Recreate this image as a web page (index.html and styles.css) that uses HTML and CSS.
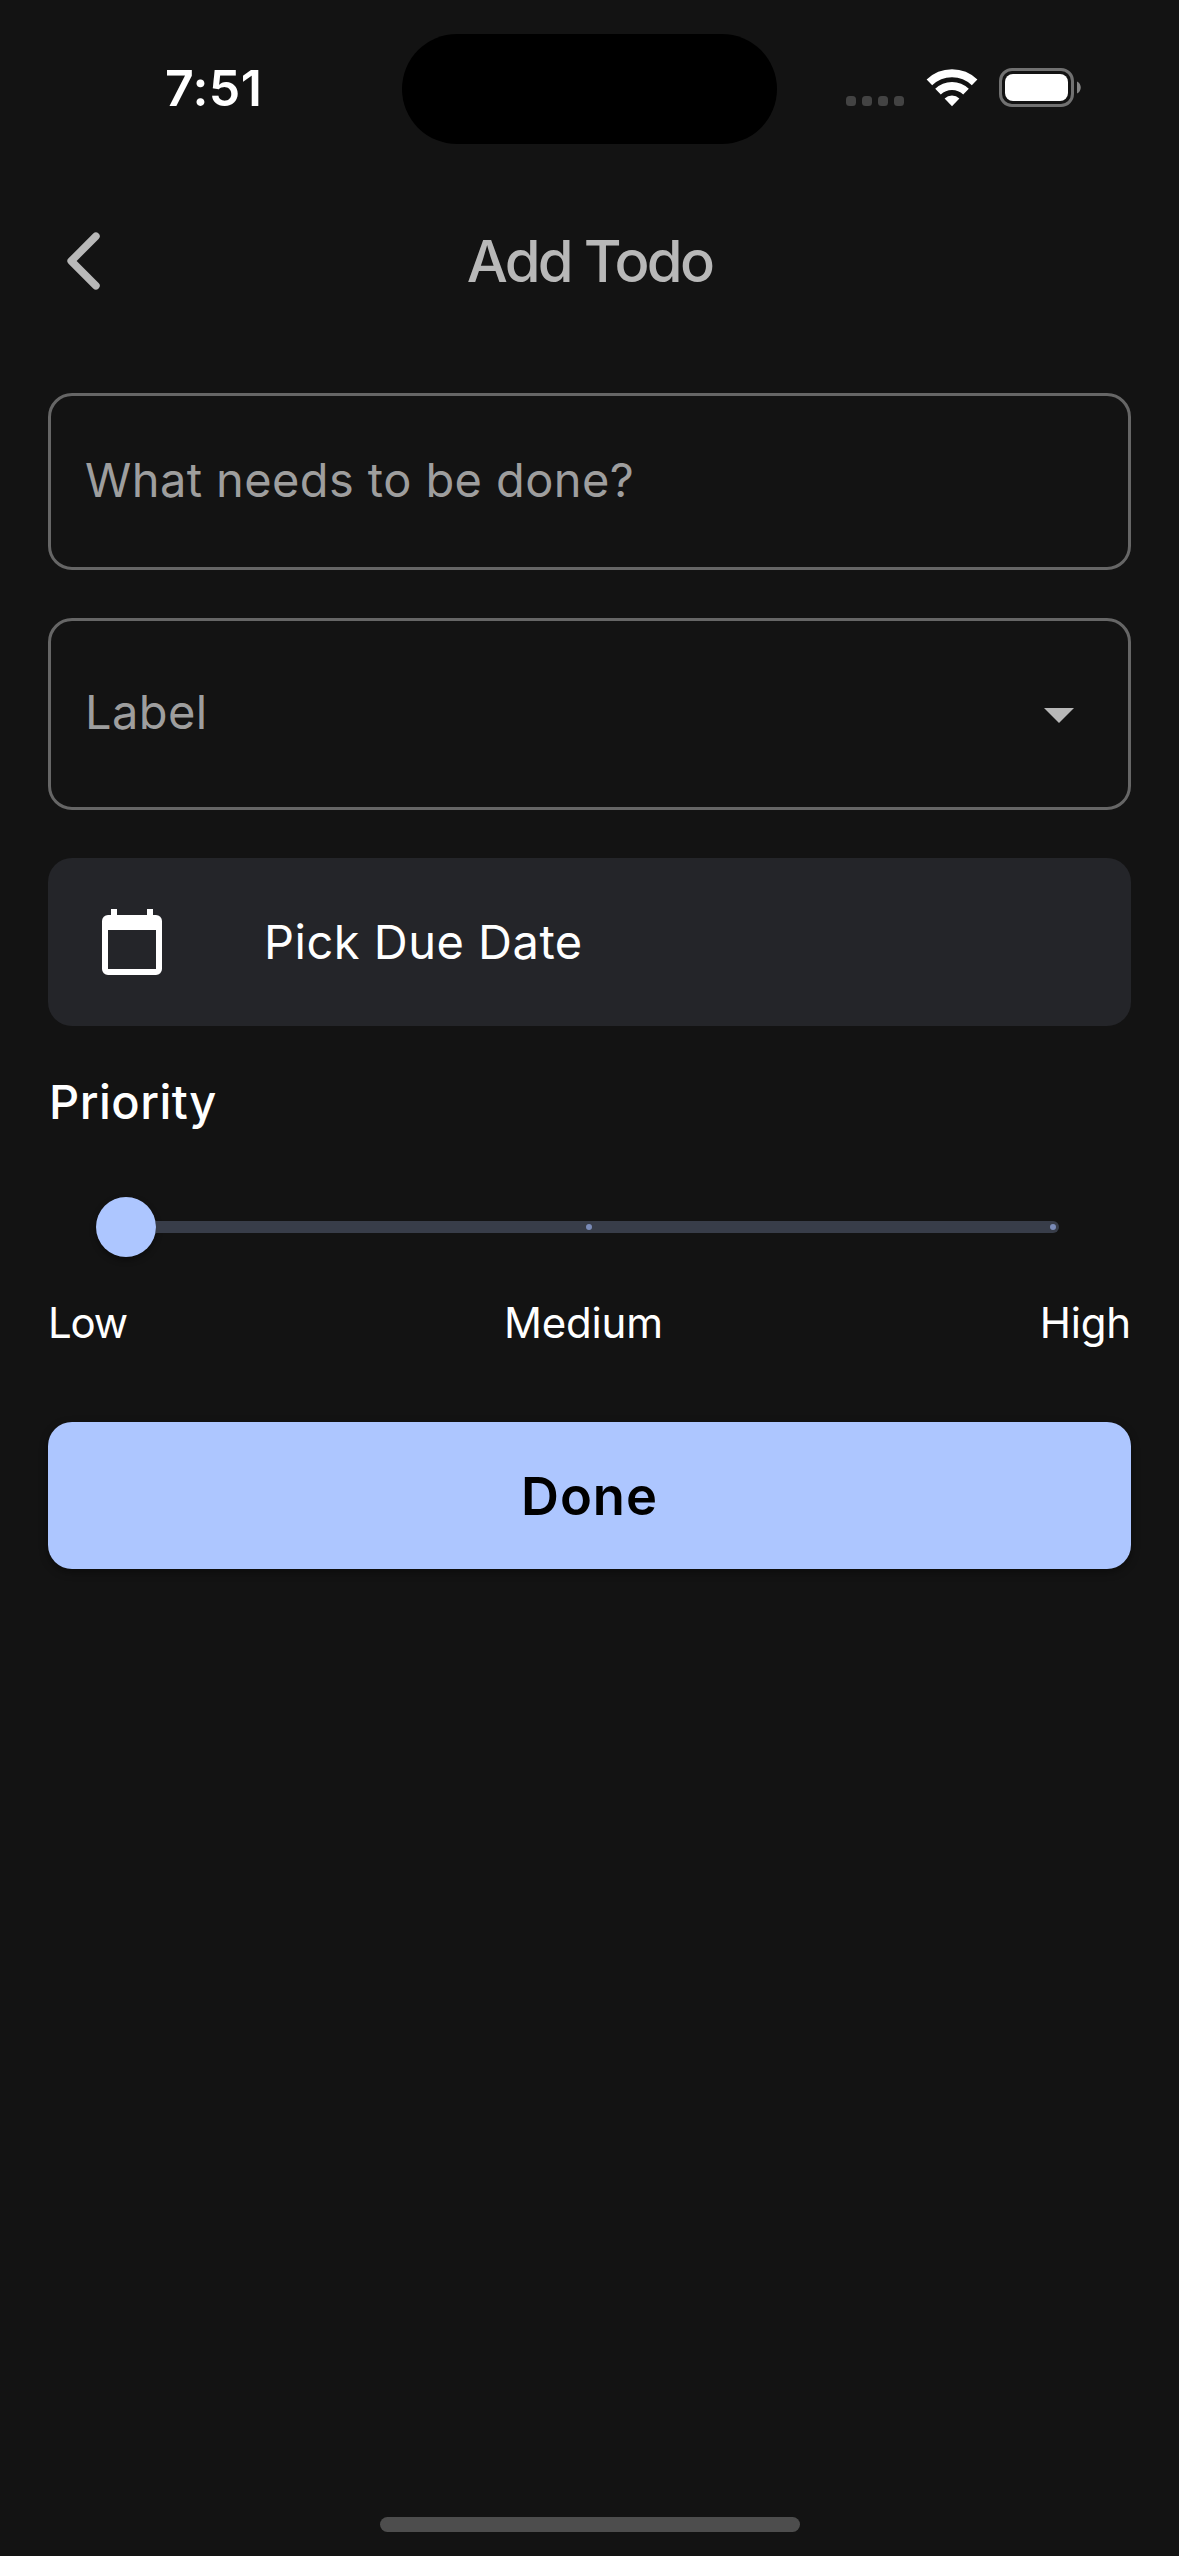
FILE: index.html
```html
<!DOCTYPE html>
<html lang="en">
<head>
<meta charset="utf-8">
<title>Add Todo</title>
<link rel="stylesheet" href="styles.css">
</head>
<body>
<div class="screen">
  <header class="status">
    <div class="status-left"><span class="time">7:51</span></div>
    <div class="island"></div>
    <div class="status-right">
      <div class="cell"><i></i><i></i><i></i><i></i></div>
      <svg class="wifi" width="52" height="38" viewBox="0 0 52 38">
        <g fill="none" stroke="#fff">
          <path d="M3.4 13.4A32.5 32.5 0 0 1 48.6 13.4" stroke-width="8"/>
          <path d="M12 22.6A20 20 0 0 1 40 22.6" stroke-width="8"/>
        </g>
        <path d="M26 37.2L18.6 29.6A10.5 10.5 0 0 1 33.4 29.6Z" fill="#fff"/>
      </svg>
      <svg class="battery" width="84" height="39" viewBox="0 0 84 39">
        <rect x="1.5" y="1.5" width="72" height="36" rx="11.5" fill="none" stroke="#717171" stroke-width="3"/>
        <rect x="6" y="6" width="63" height="27" rx="8" fill="#fff"/>
        <path d="M78 13.5C83 15.5 83 23.500 78 25.500Z" fill="#858585"/>
      </svg>
    </div>
  </header>

  <nav class="appbar">
    <svg class="back" width="34" height="58" viewBox="0 0 34 58">
      <path d="M28.900 4.300L4.200 29L28.900 53.700" fill="none" stroke="#b8b8b8" stroke-width="7.600" stroke-linecap="round" stroke-linejoin="round"/>
    </svg>
    <h1 class="title">Add Todo</h1>
  </nav>

  <main class="form">
    <div class="field task"><span class="hint">What needs to be done?</span></div>
    <div class="field select">
      <span class="hint">Label</span>
      <svg width="30" height="15" viewBox="0 0 30 15"><path d="M0 0H30L15 15Z" fill="#b8b8b8"/></svg>
    </div>
    <div class="date">
      <svg width="60" height="66" viewBox="0 0 60 66">
        <path fill="#fff" fill-rule="evenodd" d="M9 0H15V6H45V0H51V6H54A6 6 0 0 1 60 12V60A6 6 0 0 1 54 66H6A6 6 0 0 1 0 60V12A6 6 0 0 1 6 6H9ZM6 21V60H54V21Z"/>
      </svg>
      <span class="date-text">Pick Due Date</span>
    </div>
    <h2 class="priority">Priority</h2>
    <div class="slider">
      <span class="thumb"></span>
      <div class="track"><i class="tick"></i><i class="tick"></i></div>
    </div>
    <div class="scale"><span class="low">Low</span><span class="medium">Medium</span><span class="high">High</span></div>
    <div class="done" role="button"><span>Done</span></div>
  </main>
  <div class="home"></div>
</div>
</body>
</html>
```

FILE: styles.css
```css
* { box-sizing: border-box; }
body {
  margin: 0;
  background: #131313;
  color: #fff;
  font-family: Inter, "Liberation Sans", sans-serif;
}
svg { display: block; flex: none; }
.screen {
  width: 1179px;
  height: 2556px;
  display: flex;
  flex-direction: column;
  overflow: hidden;
}
.status {
  height: 178px;
  display: grid;
  grid-template-columns: 402px 375px 402px;
}
.status-left { padding: 58px 0 0 165px; }
.time {
  display: block;
  font-size: 50px;
  line-height: 60px;
  font-weight: 600;
  letter-spacing: .4px;
}
.island { height: 110px; margin-top: 34px; border-radius: 55px; background: #000; }
.status-right { display: flex; align-items: flex-start; padding: 68px 0 0 69px; }
.cell { display: flex; gap: 6px; margin: 28px 22px 0 0; }
.cell i { width: 10px; height: 10px; border-radius: 3.5px; background: #434343; }
.wifi { margin-right: 21px; margin-top: 1px; }

.appbar {
  height: 166px;
  display: grid;
  grid-template-columns: 100px 1fr 100px;
  align-items: center;
}
.back { margin-left: 67px; }
.title {
  margin: 0;
  color: #b8b8b8;
  font-size: 58px;
  line-height: 70px;
  font-weight: 500;
  letter-spacing: -2.7px;
  text-align: center;
}

.form { padding: 49px 48px 0; display: flex; flex-direction: column; }
.field {
  border: 3px solid #666;
  border-radius: 24px;
  display: flex;
  align-items: center;
  padding: 0 54px 3px 34px;
}
.task { height: 177px; margin-bottom: 48px; }
.select { height: 192px; margin-bottom: 48px; padding-bottom: 5px; justify-content: space-between; }
.select svg { margin-top: 8px; }
.hint { color: #9e9e9e; font-size: 47px; line-height: 60px; letter-spacing: .4px; }
.date {
  height: 168px;
  border-radius: 24px;
  background: #242529;
  display: flex;
  align-items: center;
  gap: 102px;
  padding-left: 54px;
}
.date-text { font-size: 47px; line-height: 60px; letter-spacing: .5px; }
.priority {
  margin: 46px 0 0 1px;
  font-size: 47px;
  line-height: 60px;
  font-weight: 500;
  letter-spacing: .5px;
}
.slider { display: flex; align-items: center; height: 60px; margin: 65px 72px 0 48px; }
.thumb {
  width: 60px;
  height: 60px;
  flex: none;
  border-radius: 50%;
  background: #adc6ff;
  box-shadow: 0 3px 6px rgba(0, 0, 0, .4);
}
.track {
  flex: 1;
  height: 12px;
  border-radius: 0 6px 6px 0;
  background: #383d49;
  display: flex;
  align-items: center;
  justify-content: space-between;
  padding: 0 3px 0 430px;
}
.tick { width: 6px; height: 6px; border-radius: 50%; background: #7a8bb7; }
.scale {
  display: flex;
  justify-content: space-between;
  margin-top: 36px;
  font-size: 42px;
  line-height: 60px;
  letter-spacing: -.2px;
}
.low { letter-spacing: -1.2px; }
.done {
  height: 147px;
  margin-top: 69px;
  border-radius: 24px;
  background: #adc6ff;
  color: #000;
  display: flex;
  align-items: center;
  justify-content: center;
  font-size: 52.5px;
  line-height: 64px;
  font-weight: 600;
  letter-spacing: 1px;
  box-shadow: 0 3px 8px rgba(0, 0, 0, .4);
}
.home {
  width: 420px;
  height: 15px;
  margin: auto auto 24px 380px;
  border-radius: 7.5px;
  background: #4d4d4d;
  flex: none;
}
```
